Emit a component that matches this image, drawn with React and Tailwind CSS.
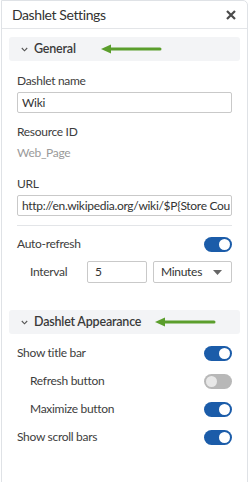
import React from 'react';

const Toggle = ({ on }) => (
  <div
    className={`w-[28px] h-[15px] rounded-full flex items-center px-[2px] ${
      on ? 'bg-[#1b5ca9] justify-end' : 'bg-[#b8b8b8] justify-start'
    }`}
  >
    <div className={`w-[11px] h-[11px] rounded-full ${on ? 'bg-white' : 'bg-[#e8e8e8]'}`} />
  </div>
);

const Arrow = ({ gap }) => (
  <svg width="61" height="10" viewBox="0 0 61 10" className={gap}>
    <path d="M7 5 H59" stroke="#5b9e2c" strokeWidth="3" strokeLinecap="round" />
    <path d="M0 5 L10 0.5 L10 9.5 Z" fill="#5b9e2c" />
  </svg>
);

const SectionHeader = ({ title, gap }) => (
  <div className="h-6 mx-[7px] rounded-[3px] bg-[#f3f4f6] flex items-center pl-[12px]">
    <svg width="7" height="5" viewBox="0 0 7 5" className="mr-[6px]">
      <path d="M0.8 1 L3.5 3.8 L6.2 1" stroke="#555" strokeWidth="1.1" fill="none" />
    </svg>
    <span className="text-[12.5px] tracking-[-0.2px] font-semibold text-[#3a3a3a] leading-none">{title}</span>
    <Arrow gap={gap} />
  </div>
);

const Label = ({ children, className = '' }) => (
  <div className={`h-[18px] leading-[18px] text-[12px] tracking-[-0.3px] text-[#3d3d3d] ${className}`}>{children}</div>
);

const Row = ({ label, on, indent }) => (
  <div className="h-[18px] flex items-center justify-between">
    <span className={`text-[12px] tracking-[-0.3px] text-[#3d3d3d] ${indent ? 'pl-[13px]' : ''}`}>{label}</span>
    <Toggle on={on} />
  </div>
);

export default function App() {
  return (
    <div className="w-[250px] h-[482px] bg-white pl-px" style={{ fontFamily: 'Lato, "Open Sans", sans-serif' }}>
      <div className="w-[247px] h-[490px] border border-[#dfe2e6] rounded-tr-[5px] bg-white">
        <div className="h-[28px] border-b border-[#e3e5e8] flex items-center justify-between pl-[10px] pr-[11px]">
          <span className="text-[14px] tracking-[-0.4px] text-[#333]">Dashlet Settings</span>
          <svg width="10" height="10" viewBox="0 0 10 10">
            <path d="M1 1 L9 9 M9 1 L1 9" stroke="#4a4a4a" strokeWidth="2.2" />
          </svg>
        </div>

        <div className="pt-2">
          <SectionHeader title="General" gap="ml-[25px]" />
          <div className="px-[15px]">
            <Label className="mt-[11px]">Dashlet name</Label>
            <div className="mt-[2px] h-[21px] border border-[#c9c9c9] rounded-[2px] flex items-center px-[4px] text-[12px] tracking-[-0.3px] text-[#333]">
              Wiki
            </div>
            <Label className="mt-[10px]">Resource ID</Label>
            <div className="mt-[3px] h-[18px] leading-[18px] text-[12px] tracking-[-0.3px] text-[#9a9a9a]">Web_Page</div>
            <Label className="mt-[13px]">URL</Label>
            <div className="mt-[2px] h-[21px] border border-[#c9c9c9] rounded-[2px] flex items-center px-[4px] text-[12px] tracking-[-0.3px] text-[#333] overflow-hidden whitespace-nowrap">
              http://en.wikipedia.org/wiki/$P{'{'}Store Cou
            </div>
            <div className="mt-[9px] border-t border-[#e3e5e8]" />
            <div className="mt-[9px]">
              <Row label="Auto-refresh" on />
            </div>
            <div className="mt-[8px] flex items-center h-[22px]">
              <span className="w-[70px] pl-[13px] text-[12px] tracking-[-0.3px] text-[#3d3d3d]">Interval</span>
              <div className="w-[60px] h-[22px] border border-[#c9c9c9] rounded-[2px] flex items-center px-[7px] text-[12px] text-[#333]">
                5
              </div>
              <div className="ml-[6px] flex-1 h-[22px] border border-[#c9c9c9] rounded-[2px] flex items-center justify-between pl-[7px] pr-[9px] text-[12px] tracking-[-0.3px] text-[#333]">
                <span>Minutes</span>
                <svg width="9" height="5" viewBox="0 0 9 5">
                  <path d="M0 0 L9 0 L4.5 5 Z" fill="#666" />
                </svg>
              </div>
            </div>
          </div>

          <div className="mt-[27px]">
            <SectionHeader title="Dashlet Appearance" gap="ml-[14px]" />
          </div>
          <div className="px-[15px] mt-[10px] flex flex-col gap-[10px]">
            <Row label="Show title bar" on />
            <Row label="Refresh button" indent />
            <Row label="Maximize button" on indent />
            <Row label="Show scroll bars" on />
          </div>
        </div>
      </div>
    </div>
  );
}
